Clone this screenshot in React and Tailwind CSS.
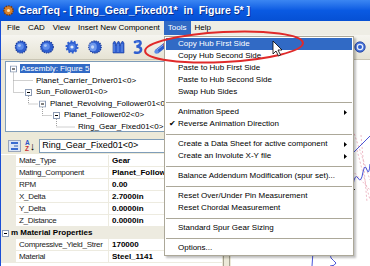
import React from 'react';

const MENU = [
  { label: 'Copy Hub First Side', active: true },
  { label: 'Copy Hub Second Side' },
  { label: 'Paste to Hub First Side' },
  { label: 'Paste to Hub Second Side' },
  { label: 'Swap Hub Sides' },
  { sep: true },
  { label: 'Animation Speed', sub: true },
  { label: 'Reverse Animation Direction', checked: true },
  { sep: true },
  { label: 'Create a Data Sheet for active component', sub: true },
  { label: 'Create an Involute X-Y file', sub: true },
  { sep: true },
  { label: 'Balance Addendum Modification (spur set)...' },
  { sep: true },
  { label: 'Reset Over/Under Pin Measurement' },
  { label: 'Reset Chordal Measurement' },
  { sep: true },
  { label: 'Standard Spur Gear Sizing' },
  { sep: true },
  { label: 'Options...' },
];

const TREE = [
  { label: 'Assembly: Figure 5', pad: 'pl-[14px]', selected: true },
  { label: 'Planet_Carrier_Driver01<0>', pad: 'pl-[29px]' },
  { label: 'Sun_Follower01<0>', pad: 'pl-[29px]' },
  { label: 'Planet_Revolving_Follower01<0>', pad: 'pl-[43px]' },
  { label: 'Planet_Follower02<0>', pad: 'pl-[57px]' },
  { label: 'Ring_Gear_Fixed01<0>', pad: 'pl-[71px]' },
];

const PROPS = [
  ['Mate_Type', 'Gear'],
  ['Mating_Component', 'Planet_Follower02<0>'],
  ['RPM', '0.00'],
  ['X_Delta', '2.7000in'],
  ['Y_Delta', '0.0000in'],
  ['Z_Distance', '0.0000in'],
  { category: 'm Material Properties' },
  ['Compressive_Yield_Strer', '170000'],
  ['Material', 'Steel_1141'],
];

const MENUBAR = ['File', 'CAD', 'View', 'Insert New Component', 'Tools', 'Help'];

const TitleIcon = () => (
  <svg width="11" height="11" viewBox="0 0 11 11">
    <circle cx="5.5" cy="5.5" r="4.6" fill="#D9822B" stroke="#7A3C0E" strokeWidth="1.4" strokeDasharray="1.6 1" />
    <circle cx="5.5" cy="5.5" r="1.6" fill="#FFE3B5" />
  </svg>
);

const DiscGear = ({ big }) => (
  <svg width="14" height="14" viewBox="0 0 14 14">
    <ellipse cx="7" cy="7" rx={big ? 6.3 : 5.6} ry="6" fill="#2F5FD0" stroke="#1B3C9A" strokeWidth="1.2" strokeDasharray="1.4 0.9" />
    <ellipse cx="6.2" cy="6.4" rx="3.6" ry="3.4" fill="#5C8BEA" />
    <ellipse cx="5.4" cy="5.6" rx="1.5" ry="1.4" fill="#A9C4F6" />
  </svg>
);

const Cog = () => (
  <svg width="14" height="14" viewBox="0 0 14 14">
    <circle cx="7" cy="7" r="5.2" fill="#2F5FD0" stroke="#2F5FD0" strokeWidth="2.6" strokeDasharray="1.8 1.4" />
    <circle cx="7" cy="7" r="3.4" fill="#4E7FE4" />
    <circle cx="7" cy="7" r="1.6" fill="#E8EEF8" />
  </svg>
);

const Bevel = () => (
  <svg width="15" height="14" viewBox="0 0 15 14">
    <ellipse cx="8" cy="7" rx="6.2" ry="6" fill="#2F5FD0" stroke="#1B3C9A" strokeWidth="1.3" strokeDasharray="1.3 0.9" />
    <ellipse cx="6" cy="7" rx="3.8" ry="4.2" fill="#6D97EC" />
    <ellipse cx="5.6" cy="7" rx="1.6" ry="1.8" fill="#C6D7F8" />
  </svg>
);

const Rack = () => (
  <svg width="13" height="14" viewBox="0 0 13 14">
    <path d="M1 13 L1 3 L2.5 1 L4 3 L4 6 L5 3 L6.5 1 L8 3 L8 6 L9 3 L10.5 1 L12 3 L12 13 Z" fill="#2F5FD0" stroke="#1B3C9A" strokeWidth="0.6" />
    <path d="M2 12 L2 4 M6 12 L6 4 M10 12 L10 4" stroke="#6D97EC" strokeWidth="1" />
  </svg>
);

const Worm = () => (
  <svg width="10" height="14" viewBox="0 0 10 14">
    <path d="M2 2 Q8 0 7.5 3.5 Q6.5 6 3.5 6.5 Q8.5 7 8 10 Q7.5 13.5 2 12.5" fill="none" stroke="#2F5FD0" strokeWidth="2.6" strokeLinecap="round" />
    <path d="M3 2.2 Q6.5 1.5 6.4 3.2" fill="none" stroke="#8DB0F0" strokeWidth="0.8" />
  </svg>
);

const Shaft = () => (
  <svg width="17" height="14" viewBox="0 0 17 14">
    <path d="M2 10 L11 3 L14 6.5 L5 13.5 Z" fill="#2F5FD0" />
    <path d="M3 10.5 L11.5 4" stroke="#8DB0F0" strokeWidth="1" />
    <ellipse cx="3.5" cy="11.8" rx="2.2" ry="2" fill="#5C8BEA" />
    <ellipse cx="13" cy="4.8" rx="2.6" ry="2.6" fill="#D83A3A" />
    <ellipse cx="13" cy="4.8" rx="1.2" ry="1.2" fill="#F7F6F1" />
  </svg>
);

const Target = () => (
  <svg width="12" height="12" viewBox="0 0 12 12">
    <circle cx="6" cy="6" r="5.2" fill="#4A74D9" stroke="#1B3C9A" strokeWidth="0.8" />
    <circle cx="6" cy="6" r="3.3" fill="#E6EEFB" />
    <circle cx="6" cy="6" r="2" fill="#2F5FD0" />
  </svg>
);

const MinusBox = () => (
  <svg width="7" height="7" viewBox="0 0 7 7">
    <rect x="0.5" y="0.5" width="6" height="6" fill="#FFFFFF" stroke="#8D9CB5" />
    <path d="M2 3.5 H5" stroke="#000000" />
  </svg>
);

const SubArrow = () => (
  <svg width="3" height="5" viewBox="0 0 3 5">
    <path d="M0 0 L3 2.5 L0 5 Z" fill="#000000" />
  </svg>
);

const TreeLines = () => (
  <svg className="absolute inset-0" width="216" height="70">
    <g stroke="#A0A0A0" strokeWidth="1" strokeDasharray="1 1" fill="none">
      <path d="M7.5 10.5 V30.5 M7.5 18.5 H27 M7.5 30.5 H18" />
      <path d="M22.5 34 V42 M22.5 42 H32" />
      <path d="M36.5 45 V53.5 M36.5 53.5 H46" />
      <path d="M50.5 57 V65 M50.5 65 H69" />
    </g>
    <g transform="translate(4 3.5)"><MinusBox /></g>
    <g transform="translate(19 27)"><MinusBox /></g>
    <g transform="translate(33 38.5)"><MinusBox /></g>
    <g transform="translate(47 50)"><MinusBox /></g>
  </svg>
);

export default function App() {
  return (
    <div className="relative w-[370px] h-[266px] overflow-hidden bg-[#ECE9D8] font-['Liberation_Sans',Arial,sans-serif] text-[8px] text-black select-none">
      {/* Title bar */}
      <div className="h-[21px] flex items-center bg-gradient-to-b from-[#3B86F2] via-[#0A5AE2] to-[#0650D4]">
        <div className="ml-[3px]"><TitleIcon /></div>
        <span className="ml-[4px] whitespace-pre text-[10.5px] font-bold text-white [text-shadow:1px_1px_0_#0B2F8A]">
          GearTeq - [ Ring_Gear_Fixed01*  in  Figure 5* ]
        </span>
      </div>

      <div className="border-l border-[#1A4ED6] h-[245px] flex flex-col">
        {/* Menu bar */}
        <div className="h-[14px] flex items-stretch pl-[2px] bg-[#EEEDE5]">
          {MENUBAR.map((m) => (
            <div
              key={m}
              className={`px-[4px] flex items-center ${m === 'Tools' ? 'bg-[#316AC5] text-white' : ''}`}
            >
              {m}
            </div>
          ))}
        </div>

        {/* Toolbar */}
        <div className="h-[25px] flex items-center gap-[8px] pl-[13px] bg-gradient-to-b from-[#F6F5F0] to-[#E6E3D4] border-b border-[#C9C5B4]">
          <DiscGear />
          <div className="ml-[4px]"><DiscGear big /></div>
          <div className="ml-[3px]"><Cog /></div>
          <Bevel />
          <div className="ml-[2px]"><Rack /></div>
          <Worm />
          <div className="ml-[2px]"><Shaft /></div>
          <DiscGear />
          <div className="ml-auto mr-[4px]"><Target /></div>
        </div>

        {/* Main area */}
        <div className="flex-1 flex min-h-0">
          <div className="w-[221px] flex flex-col">
            {/* Assembly tree */}
            <div className="ml-[4px] mt-[1px] h-[71px] relative bg-white border border-[#7F9DB9] pt-[1px] overflow-hidden">
              <TreeLines />
              {TREE.map((t) => (
                <div key={t.label} className={`relative h-[11.6px] leading-[11.6px] whitespace-nowrap ${t.pad}`}>
                  <span className={t.selected ? 'bg-[#316AC5] text-white px-[1px]' : 'px-[1px]'}>{t.label}</span>
                </div>
              ))}
            </div>

            {/* Property toolbar */}
            <div className="h-[22px] flex items-end pb-[1px] pl-[7px]">
              <div className="w-[13px] h-[12px] mb-[1px] border border-[#9AA6BC] bg-[#DCE6F6] flex flex-col justify-center gap-[1px] px-[2px]">
                <div className="h-[2px] bg-[#3A6BD0]" />
                <div className="h-[2px] bg-[#8BA4D4] ml-[3px]" />
                <div className="h-[2px] bg-[#3A6BD0]" />
              </div>
              <div className="ml-[4px] mb-[1px] flex items-center">
                <div className="flex flex-col leading-[6px] text-[6.5px] font-bold">
                  <span className="text-[#2952C8]">A</span>
                  <span className="text-[#C83030]">Z</span>
                </div>
                <span className="text-[11px] leading-[11px] font-bold">↓</span>
              </div>
              <div className="ml-[4px] flex-1 h-[14px] bg-white border border-[#7F9DB9] flex items-center pl-[2px] text-[9px] whitespace-nowrap overflow-hidden">
                Ring_Gear_Fixed01&lt;0&gt;
              </div>
            </div>

            {/* Property grid */}
            <div className="flex-1 bg-white overflow-hidden pt-[1px]">
              {PROPS.map((p, i) =>
                p.category ? (
                  <div key={i} className="h-[12px] flex items-center bg-[#EDEBE0] whitespace-nowrap">
                    <div className="ml-[1px]"><MinusBox /></div>
                    <span className="ml-[2px] font-bold">{p.category}</span>
                  </div>
                ) : (
                  <div key={i} className="h-[12px] flex whitespace-nowrap">
                    <div className="w-[15px] bg-[#EDEBE0]" />
                    <div className="w-[93px] pl-[3px] flex items-center overflow-hidden border-b border-r border-[#EDEBE0] text-[#222] tracking-[-0.3px]">
                      {p[0]}
                    </div>
                    <div className="flex-1 pl-[3px] flex items-center overflow-hidden border-b border-[#EDEBE0] font-bold">
                      {p[1]}
                    </div>
                  </div>
                )
              )}
            </div>
          </div>

          {/* Splitter */}
          <div className="w-[9px] flex justify-between px-[1px]">
            <div className="w-[1px] bg-[#A7A492]" />
            <div className="w-[1px] bg-[#A7A492]" />
          </div>

          {/* Gear canvas */}
          <div className="flex-1 relative bg-white">
            <svg className="absolute inset-0" width="139" height="206" viewBox="0 0 139 206">
              <g stroke="#E8A8B8" strokeWidth="0.8" strokeDasharray="2 2" fill="none">
                <path d="M122 70 L139 120" />
                <path d="M126 90 L139 140" />
                <path d="M121 110 L139 130" />
                <path d="M130 75 L136 142" />
              </g>
              <g stroke="#4A55D8" strokeWidth="1" fill="none">
                <path d="M123 92 L139 76" />
                <path d="M122 125 Q124 113 127 118 Q130 124 132 112 Q134 103 136 110 Q138 116 139 104" />
                <path d="M82 192 L81 206" />
                <path d="M106 193 Q98 194 100 198 Q103 201 105 203 Q104 206 99 206" />
              </g>
              <path d="M122 128 L124 130" stroke="#333" strokeWidth="1" />
            </svg>
          </div>
        </div>
      </div>

      {/* Tools dropdown */}
      <div className="absolute left-[164px] top-[36px] w-[190px] bg-white border border-[#ACA899] p-[1px] shadow-[2px_2px_2px_rgba(0,0,0,0.25)]">
        {MENU.map((m, i) =>
          m.sep ? (
            <div key={i} className="h-[8px] flex items-center">
              <div className="h-[1px] w-full bg-[#ACA899]" />
            </div>
          ) : (
            <div
              key={i}
              className={`h-[12px] flex items-center whitespace-nowrap ${m.active ? 'bg-[#316AC5] text-white' : ''}`}
            >
              <span className="w-[12px] text-center text-[8px] leading-none pl-[1px]">{m.checked ? '✔' : ''}</span>
              <span className="flex-1">{m.label}</span>
              {m.sub && (
                <span className="mr-[5px]"><SubArrow /></span>
              )}
            </div>
          )
        )}
      </div>

      {/* Annotation ellipse and mouse pointer */}
      <svg className="absolute inset-0 pointer-events-none" width="370" height="266">
        <ellipse cx="224" cy="47" rx="79" ry="15" transform="rotate(-3 224 47)" fill="none" stroke="#E02A2A" strokeWidth="2" />
        <path d="M273 41 L273 54 L276 51 L278.5 56 L280.5 55 L278 50 L282 50 Z" fill="#FFFFFF" stroke="#000000" strokeWidth="0.8" />
      </svg>
    </div>
  );
}
